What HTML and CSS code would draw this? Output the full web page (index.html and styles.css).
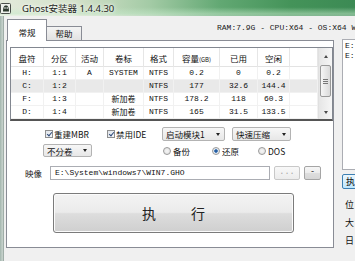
FILE: index.html
```html
<html>

<head>
    <meta charset="UTF-8" />
    <title>Ghost安装器 1.4.4.30</title>
    <link rel="stylesheet" href="styles.css">
</head>

<body>
    <div class="window">
        <div class="titlebar">
            <svg class="appicon" viewBox="0 0 12 13" width="12" height="13">
                <rect x="0.5" y="1.5" width="10" height="10" rx="1" fill="#eef1ec" stroke="#4a4f4a" />
                <path d="M3 10 C3 5 4 3.5 6 3.5 C8 3.5 9 5 9 10 L8 9 L7 10 L6 9 L5 10 L4 9 Z" fill="#2c3a2e" />
                <circle cx="5" cy="6" r="0.8" fill="#fff" />
                <circle cx="7.2" cy="6" r="0.8" fill="#fff" />
            </svg>
            <span class="title">Ghost安装器 1.4.4.30</span>
        </div>
        <div class="frame">
            <div class="edge"></div>
            <div class="main">
                <div class="tabstrip">
                    <div class="tab active">常规</div>
                    <div class="tab">帮助</div>
                    <div class="sysinfo">RAM:7.9G - CPU:X64 - OS:X64 WI</div>
                </div>
                <div class="panel">
                    <div class="list">
                        <div class="grid">
                            <div class="row head">
                                <div>盘符</div>
                                <div>分区</div>
                                <div>活动</div>
                                <div>卷标</div>
                                <div>格式</div>
                                <div>容量<small>(GB)</small></div>
                                <div>已用</div>
                                <div>空闲</div>
                                <div></div>
                            </div>
                            <div class="row">
                                <div>H:</div>
                                <div>1:1</div>
                                <div>A</div>
                                <div>SYSTEM</div>
                                <div>NTFS</div>
                                <div>0.2</div>
                                <div>0</div>
                                <div>0.2</div>
                                <div></div>
                            </div>
                            <div class="row sel">
                                <div>C:</div>
                                <div>1:2</div>
                                <div></div>
                                <div></div>
                                <div>NTFS</div>
                                <div>177</div>
                                <div>32.6</div>
                                <div>144.4</div>
                                <div></div>
                            </div>
                            <div class="row">
                                <div>F:</div>
                                <div>1:3</div>
                                <div></div>
                                <div class="zh">新加卷</div>
                                <div>NTFS</div>
                                <div>178.2</div>
                                <div>118</div>
                                <div>60.3</div>
                                <div></div>
                            </div>
                            <div class="row">
                                <div>D:</div>
                                <div>1:4</div>
                                <div></div>
                                <div class="zh">新加卷</div>
                                <div>NTFS</div>
                                <div>165</div>
                                <div>31.5</div>
                                <div>133.5</div>
                                <div></div>
                            </div>
                        </div>
                        <div class="vscroll">
                            <div class="arrow up"></div>
                            <div class="thumb"></div>
                            <div class="track"></div>
                            <div class="arrow down"></div>
                        </div>
                    </div>

                    <div class="opts row1">
                        <label class="chk w1"><span class="box on"></span>重建MBR</label>
                        <label class="chk w2"><span class="box on"></span>禁用IDE</label>
                        <div class="combo c1">启动模块1<span class="caret"></span></div>
                        <div class="combo c2">快速压缩<span class="caret"></span></div>
                    </div>

                    <div class="opts row2">
                        <div class="combo c3">不分卷<span class="caret"></span></div>
                        <label class="radio r1"><span class="dot"></span>备份</label>
                        <label class="radio r2"><span class="dot on"></span>还原</label>
                        <label class="radio"><span class="dot"></span>DOS</label>
                    </div>

                    <div class="opts row3">
                        <span class="lbl">映像</span>
                        <div class="path">E:\System\windows7\WIN7.GHO</div>
                        <div class="btn small dim">...</div>
                        <div class="btn small minus">-</div>
                    </div>

                    <div class="exec"><span>执</span><span>行</span></div>
                </div>
            </div>
            <div class="side">
                <div class="drives">E:<br>E:</div>
                <div class="sbtn">执</div>
                <div class="info first">位</div>
                <div class="info">大</div>
                <div class="info">日</div>
            </div>
        </div>
    </div>
</body>

</html>
```

FILE: styles.css
```css
* {
    box-sizing: border-box;
}

html,
body {
    margin: 0;
    padding: 0;
}

body {
    width: 355px;
    height: 261px;
    overflow: hidden;
    background-color: #f0f0f0;
    font-family: "Liberation Mono", "Noto Sans CJK SC", monospace;
    font-size: 8px;
    color: #111;
}

.window {
    display: flex;
    flex-direction: column;
    height: 261px;
}

/* title bar, green aero glass */
.titlebar {
    flex: none;
    height: 16px;
    display: flex;
    align-items: center;
    background: linear-gradient(180deg, rgba(255, 255, 255, 0) 45%, rgba(200, 235, 205, 0.5) 85%, rgba(255, 255, 255, 0.35) 100%),
        linear-gradient(90deg, #e3eadb 0%, #d2e0c8 22%, #a4cba6 42%, #62a873 62%, #449359 82%, #3c8a54 100%);
}

.appicon {
    flex: none;
    margin-left: 0;
}

.title {
    margin-left: 10px;
    font-family: "Noto Sans", "Noto Sans CJK SC", sans-serif;
    font-size: 9.5px;
    color: #1e2420;
    text-shadow: 0 0 3px #fff, 0 0 6px #fff;
}

.frame {
    flex: 1;
    display: flex;
    overflow: hidden;
}

.edge {
    flex: none;
    width: 4px;
    background: linear-gradient(90deg, #a3b5ad 0, #c6d2cc 60%, #8e9d97 100%);
}

.main {
    flex: none;
    width: 328px;
    margin-left: 2px;
    display: flex;
    flex-direction: column;
}

/* tabs */
.tabstrip {
    height: 24px;
    display: flex;
    align-items: flex-end;
    position: relative;
    z-index: 1;
    font-family: "Noto Sans CJK SC", sans-serif;
    font-size: 8.5px;
}

.tab {
    flex: none;
    width: 35px;
    height: 14px;
    border: 1px solid #898c95;
    border-left: none;
    border-bottom: none;
    background: linear-gradient(#f4f4f4, #e2e2e2);
    text-align: center;
    line-height: 13px;
    white-space: nowrap;
}

.tab.active {
    width: 40px;
    height: 22px;
    margin-left: 1px;
    margin-bottom: -1px;
    border-left: 1px solid #898c95;
    background: #fff;
    line-height: 25px;
}

.sysinfo {
    flex: none;
    align-self: flex-start;
    margin-top: 7px;
    margin-left: 135px;
    white-space: nowrap;
    font-family: "Liberation Mono", monospace;
    font-size: 8px;
    color: #222;
}

.panel {
    height: 208px;
    border: 1px solid #898c95;
    background-color: #fff;
}

/* partition list */
.list {
    display: flex;
    width: 323px;
    height: 74px;
    margin: 6px 0 0 3px;
    border: 1px solid #828790;
    border-bottom: 2px solid #555;
}

.grid {
    width: 307px;
}

.row {
    display: grid;
    grid-template-columns: 33px 32px 28px 40px 30px 46px 38px 32px 1fr;
    height: 13px;
    border-bottom: 1px solid #f1f1f1;
}

.row div {
    text-align: center;
    line-height: 12px;
    border-right: 1px solid #f1f1f1;
    white-space: nowrap;
}

.row .zh {
    font-size: 8px;
    font-family: "Noto Sans CJK SC", sans-serif;
}

.row.head {
    height: 19px;
    border-bottom: 1px solid #e3e3e3;
    font-family: "Noto Sans CJK SC", sans-serif;
    font-size: 8.5px;
}

.row.head div {
    line-height: 20px;
    border-right: 1px solid #e6e6e6;
}

.row.head small {
    font-size: 6px;
}

.row.sel {
    background-color: #e9e9e9;
}

.vscroll {
    flex: none;
    width: 14px;
    display: flex;
    flex-direction: column;
    background: linear-gradient(90deg, #e6e6e6, #f6f6f6);
    border-left: 1px solid #e0e0e0;
}

.arrow {
    height: 16px;
    display: flex;
    align-items: center;
    justify-content: center;
}

.arrow::after {
    content: "";
    border-left: 2.5px solid transparent;
    border-right: 2.5px solid transparent;
}

.arrow.up::after {
    border-bottom: 3px solid #4a4a4a;
}

.arrow.down {
    height: 14px;
}

.arrow.down::after {
    border-top: 3px solid #4a4a4a;
}

.thumb {
    height: 32px;
    margin: 1px 1px 0 1px;
    border: 1px solid #999;
    border-radius: 2px;
    background: linear-gradient(90deg, #f6f6f6, #dadada);
    display: flex;
    align-items: center;
    justify-content: center;
}

.thumb::after {
    content: "";
    width: 5px;
    height: 5px;
    background: repeating-linear-gradient(180deg, #777 0, #777 1px, transparent 1px, transparent 2px);
}

.track {
    flex: 1;
}

/* option rows */
.opts {
    display: flex;
    align-items: center;
    font-family: "Noto Sans CJK SC", sans-serif;
    font-size: 8.5px;
}

.row1 {
    height: 14px;
    margin-top: 6px;
    padding-left: 38px;
}

.row2 {
    height: 13px;
    margin-top: 3px;
    padding-left: 36px;
}

.row3 {
    height: 14px;
    margin-top: 9px;
    padding-left: 18px;
}

.chk,
.radio {
    flex: none;
    display: flex;
    align-items: center;
    white-space: nowrap;
}

.w1 {
    width: 62px;
}

.w2 {
    width: 55px;
}

.box {
    width: 8px;
    height: 8px;
    margin-right: 1px;
    border: 1px solid #8f8f8f;
    background: linear-gradient(135deg, #dfe4ea, #f7f8fa);
    position: relative;
}

.box.on::after {
    content: "";
    position: absolute;
    left: 2px;
    top: 0;
    width: 2px;
    height: 4px;
    border: solid #2f4a7a;
    border-width: 0 1px 1px 0;
    transform: rotate(40deg);
}

.combo {
    flex: none;
    height: 14px;
    display: flex;
    align-items: center;
    justify-content: space-between;
    padding: 0 4px 0 3px;
    border: 1px solid #b3b3b3;
    border-radius: 2px;
    background: linear-gradient(#f7f7f7, #e7e7e7);
    white-space: nowrap;
}

.c1 {
    width: 63px;
}

.c2 {
    width: 59px;
    margin-left: 7px;
}

.c3 {
    width: 49px;
    height: 13px;
}

.caret {
    border-left: 2.5px solid transparent;
    border-right: 2.5px solid transparent;
    border-top: 3px solid #222;
}

.radio .dot {
    width: 8px;
    height: 8px;
    margin-right: 2px;
    border: 1px solid #9a9a9a;
    border-radius: 50%;
    background: radial-gradient(circle, #f6f6f6 0, #dedede 100%);
}

.radio .dot.on {
    background: radial-gradient(circle, #1f4f8f 0, #2f6bb0 35%, #dfe6ee 45%, #eef1f4 100%);
}

.r1 {
    width: 49px;
    margin-left: 71px;
}

.r2 {
    width: 46px;
}

.lbl {
    width: 25px;
}

.path {
    width: 220px;
    height: 14px;
    border: 1px solid #abadb3;
    background-color: #fff;
    padding-left: 4px;
    line-height: 12px;
    font-family: "Liberation Mono", monospace;
    font-size: 8px;
}

.btn {
    height: 14px;
    margin-left: 4px;
    border: 1px solid #b5b5b5;
    border-radius: 2px;
    text-align: center;
    line-height: 11px;
    background: linear-gradient(#f6f6f6 0, #ececec 50%, #dedede 51%, #d6d6d6 100%);
    font-family: "Liberation Mono", monospace;
}

.btn.dim {
    width: 26px;
    color: #a6a6a6;
    background: linear-gradient(#f8f8f8, #ececec);
    border-color: #c8c8c8;
}

.btn.minus {
    width: 17px;
    color: #333;
    border-color: #a5a5a5;
}

.exec {
    width: 241px;
    height: 40px;
    margin: 13px 0 0 46px;
    border: 1px solid #7b7b7b;
    border-radius: 3px;
    background: linear-gradient(#f3f3f3 0, #ebebeb 48%, #dddddd 52%, #cfcfcf 100%);
    box-shadow: inset 0 0 0 1px #fbfbfb;
    display: flex;
    align-items: center;
    justify-content: center;
    gap: 35px;
    font-family: "Noto Sans CJK SC", sans-serif;
    font-size: 14px;
    color: #222;
}

/* right column, mostly off screen */
.side {
    flex: none;
    width: 13px;
    margin-left: 8px;
    font-family: "Noto Sans CJK SC", sans-serif;
    font-size: 9px;
}

.drives {
    width: 30px;
    height: 131px;
    margin-top: 23px;
    border: 1px solid #abadb3;
    background-color: #fff;
    padding: 1px 2px;
    line-height: 10px;
    font-family: "Liberation Mono", monospace;
    font-size: 8px;
}

.sbtn {
    width: 30px;
    height: 15px;
    margin-top: 4px;
    padding-left: 3px;
    border: 1px solid #3c7fb1;
    border-radius: 2px;
    background: linear-gradient(#eaf6fd, #bee6fd);
    line-height: 13px;
}

.info {
    padding-left: 3px;
    line-height: 18px;
}

.info.first {
    margin-top: 7px;
}
```
